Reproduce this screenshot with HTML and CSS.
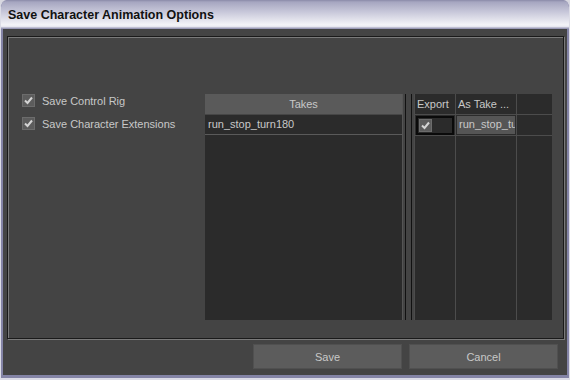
FILE: index.html
```html
<!DOCTYPE html>
<html lang="en">
<head>
    <meta charset="UTF-8">
    <title>Save Character Animation Options</title>
    <link rel="stylesheet" href="styles.css">
</head>
<body>
    <div class="window">
        <div class="titlebar">Save Character Animation Options</div>
        <div class="content">
            <div class="panel">
                <div class="options">
                    <label class="option">
                        <span class="check"><svg width="11" height="11" viewBox="0 0 11 11"><polyline points="2,5.5 4.5,8 9,2.5" fill="none" stroke="#d4d4d4" stroke-width="2"/></svg></span>
                        Save Control Rig
                    </label>
                    <label class="option">
                        <span class="check"><svg width="11" height="11" viewBox="0 0 11 11"><polyline points="2,5.5 4.5,8 9,2.5" fill="none" stroke="#d4d4d4" stroke-width="2"/></svg></span>
                        Save Character Extensions
                    </label>
                </div>

                <div class="takes">
                    <div class="takes-head">Takes</div>
                    <div class="takes-row">run_stop_turn180</div>
                </div>

                <div class="splitter">
                    <span class="split-line"></span>
                    <span class="split-line"></span>
                </div>

                <div class="export">
                    <div class="col col-export">
                        <div class="col-head">Export</div>
                        <div class="cell">
                            <div class="export-box">
                                <span class="check"><svg width="11" height="11" viewBox="0 0 11 11"><polyline points="2,5.5 4.5,8 9,2.5" fill="none" stroke="#d4d4d4" stroke-width="2"/></svg></span>
                            </div>
                        </div>
                    </div>
                    <div class="col col-take">
                        <div class="col-head">As Take ...</div>
                        <div class="cell">
                            <div class="take-name">run_stop_turn180</div>
                        </div>
                    </div>
                    <div class="col col-empty">
                        <div class="col-head"></div>
                        <div class="cell"></div>
                    </div>
                </div>
            </div>

            <div class="buttons">
                <button class="button">Save</button>
                <button class="button">Cancel</button>
            </div>
        </div>
    </div>
</body>
</html>
```

FILE: styles.css
```css
* {
    margin: 0;
    padding: 0;
    box-sizing: border-box;
}

body {
    width: 570px;
    height: 380px;
    font-family: "Liberation Sans", Arial, sans-serif;
    font-size: 11px;
    color: #c8c8c8;
    background-color: #d8d8e0;
    overflow: hidden;
}

.window {
    width: 570px;
    height: 380px;
    display: flex;
    flex-direction: column;
    border: 1px solid #dcdce6;
    border-top: none;
    border-bottom-width: 2px;
    border-radius: 7px 7px 0 0;
    overflow: hidden;
    background-color: #8484a6;
}

.titlebar {
    height: 29px;
    padding: 8px 0 0 7px;
    font-size: 12.5px;
    font-weight: bold;
    color: #111;
    background: linear-gradient(#8a8aa8 0, #a6a6c0 2px, #c8c8da 12px, #f4f4f8 25px, #e4e4ee 27px, #9a9ab6 28px);
    border-radius: 7px 7px 0 0;
}

.content {
    flex: 1;
    display: flex;
    flex-direction: column;
    margin: 0 2px 3px 2px;
    padding: 7px 3px 6px 4px;
    background-color: #444444;
}

.panel {
    flex: 1;
    display: flex;
    padding: 57px 8px 18px 0;
    border: 1px solid #1a1a1a;
    box-shadow: inset 1px 1px 0 #7a7a7a, 1px 1px 0 #7a7a7a;
}

.options {
    width: 197px;
    padding-left: 14px;
}

.option {
    display: flex;
    align-items: center;
    height: 13px;
    margin-bottom: 10px;
    gap: 7px;
}

.check {
    width: 13px;
    height: 13px;
    display: flex;
    align-items: center;
    justify-content: center;
    background-color: #5c5c5c;
    border: 1px solid #6c6c6c;
}

.takes {
    width: 198px;
    background-color: #2b2b2b;
    border-right: 1px solid #555;
}

.takes-head {
    height: 21px;
    line-height: 20px;
    text-align: center;
    background-color: #5a5a5a;
    border-bottom: 1px solid #464646;
}

.takes-row {
    height: 20px;
    line-height: 19px;
    padding-left: 3px;
    border-bottom: 1px solid #5a5a5a;
}

.splitter {
    width: 11px;
    display: flex;
    justify-content: space-between;
    padding: 0 2px;
}

.split-line {
    width: 1px;
    background-color: #111;
}

.export {
    width: 138px;
    display: flex;
    background-color: #2b2b2b;
    border-left: 1px solid #4c4c4c;
}

.col {
    display: flex;
    flex-direction: column;
    border-right: 1px solid #4c4c4c;
}

.col-export {
    width: 41px;
}

.col-take {
    width: 61px;
}

.col-empty {
    flex: 1;
    border-right: none;
}

.col-head {
    height: 21px;
    line-height: 20px;
    padding-left: 2px;
    white-space: nowrap;
    overflow: hidden;
    border-bottom: 1px solid #4c4c4c;
}

.cell {
    height: 21px;
    border-bottom: 1px solid #4c4c4c;
    padding: 1px;
}

.export-box {
    height: 19px;
    border: 2px solid #0a0a0a;
    padding: 1px 0 0 1px;
    background-color: #2b2b2b;
}

.take-name {
    height: 18px;
    line-height: 17px;
    padding-left: 2px;
    background-color: #555555;
    white-space: nowrap;
    overflow: hidden;
}

.buttons {
    display: flex;
    justify-content: flex-end;
    gap: 7px;
    padding: 5px 6px 0 0;
}

.button {
    width: 149px;
    height: 25px;
    font-family: "Liberation Sans", Arial, sans-serif;
    font-size: 11px;
    color: #c8c8c8;
    background-color: #5c5c5c;
    border: 1px solid #505050;
}
```
